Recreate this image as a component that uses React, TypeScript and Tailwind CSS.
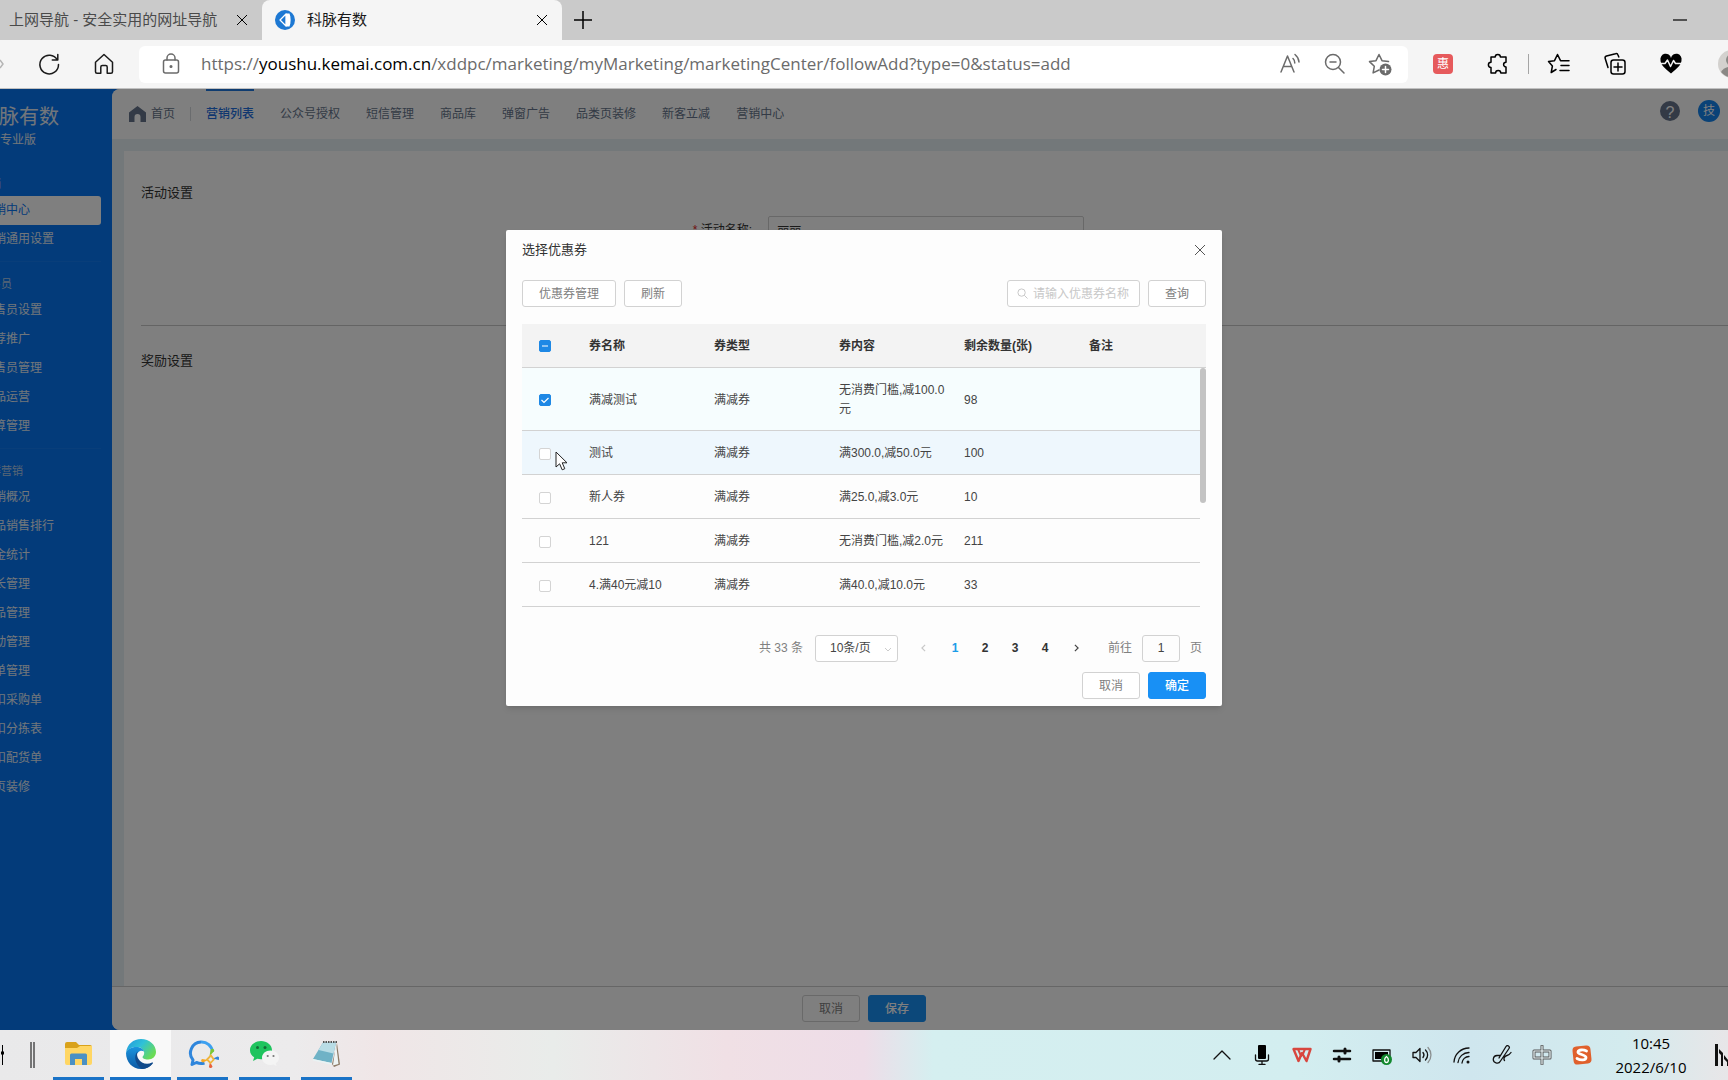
import { useEffect, useRef, useState } from "react";
import type { ReactNode } from "react";
import clsx from "clsx";

type Coupon = {
  id: number;
  name: string;
  type: string;
  content: string;
  left: number;
};

const coupons: Coupon[] = [
  { id: 1, name: "满减测试", type: "满减券", content: "无消费门槛,减100.0元", left: 98 },
  { id: 2, name: "测试", type: "满减券", content: "满300.0,减50.0元", left: 100 },
  { id: 3, name: "新人券", type: "满减券", content: "满25.0,减3.0元", left: 10 },
  { id: 4, name: "121", type: "满减券", content: "无消费门槛,减2.0元", left: 211 },
  { id: 5, name: "4.满40元减10", type: "满减券", content: "满40.0,减10.0元", left: 33 },
];

const topNav = [
  "营销列表",
  "公众号授权",
  "短信管理",
  "商品库",
  "弹窗广告",
  "品类页装修",
  "新客立减",
  "营销中心",
];

const sideGroups = [
  { title: "营销", items: ["营销中心", "营销通用设置"] },
  { title: "销售员", items: ["销售员设置", "推荐推广", "销售员管理", "商品运营", "结算管理"] },
  {
    title: "社群营销",
    items: [
      "营销概况",
      "商品销售排行",
      "佣金统计",
      "团长管理",
      "商品管理",
      "活动管理",
      "订单管理",
      "代扣采购单",
      "代扣分拣表",
      "代扣配货单",
      "首页装修",
    ],
  },
];

function CloseIcon({ className }: { className?: string }) {
  return (
    <svg className={className} viewBox="0 0 12 12" fill="none" stroke="currentColor" aria-hidden>
      <path d="M1 1l10 10M11 1L1 11" />
    </svg>
  );
}

function ToolIcon({ children, className }: { children: ReactNode; className?: string }) {
  return (
    <svg
      viewBox="0 0 24 24"
      fill="none"
      stroke="currentColor"
      strokeWidth="1.5"
      strokeLinecap="round"
      strokeLinejoin="round"
      className={clsx("size-6 shrink-0", className)}
      aria-hidden
    >
      {children}
    </svg>
  );
}

function TabBar() {
  return (
    <div className="flex h-10 items-stretch bg-[#cacaca] text-[15px]">
      <div className="flex w-[262px] items-center justify-between pr-3.5 pl-[9px] text-[#4a4a4a]">
        <span className="whitespace-nowrap">上网导航 - 安全实用的网址导航</span>
        <button type="button" aria-label="关闭标签页" className="text-black">
          <CloseIcon className="size-3" />
        </button>
      </div>
      <div className="flex w-[300px] items-center rounded-t-lg bg-[#f5f5f5] pr-3.5 pl-[13px] text-[#1a1a1a]">
        <svg viewBox="0 0 20 20" className="size-5" aria-hidden>
          <circle cx="10" cy="10" r="10" fill="#1d78d3" />
          <path d="M11 4v12L5 10z" fill="none" stroke="#fff" strokeWidth="1.300" strokeLinejoin="round" />
          <path d="M11 3.500h3.500c1.500 3.500 1.500 9.500 0 13H11z" fill="#fff" />
        </svg>
        <span className="ml-3 flex-1">科脉有数</span>
        <button type="button" aria-label="关闭标签页" className="text-black">
          <CloseIcon className="size-3" />
        </button>
      </div>
      <button type="button" aria-label="新建标签页" className="ml-3">
        <svg viewBox="0 0 18 18" className="size-[18px]" stroke="#000" strokeWidth="1.500" aria-hidden>
          <path d="M9 0v18M0 9h18" />
        </svg>
      </button>
      <button type="button" aria-label="最小化" className="mr-[41px] ml-auto">
        <svg viewBox="0 0 14 2" className="h-0.5 w-3.5" aria-hidden>
          <path d="M0 1h14" stroke="#000" strokeWidth="1.200" />
        </svg>
      </button>
    </div>
  );
}

function AddressBar() {
  return (
    <div className="flex h-12 items-center bg-[#f5f5f5] text-[#1a1a1a]">
      <svg viewBox="0 0 4 10" className="h-2.5 w-1" fill="none" stroke="#b5b5b5" strokeWidth="1.500" aria-hidden>
        <path d="M0 1l3 4-3 4" />
      </svg>
      <button type="button" aria-label="刷新" className="ml-[33px]">
        <ToolIcon>
          <path d="M20.300 8A9.300 9.300 0 1 0 21.500 12.500M20.800 2.500V8h-5.500" />
        </ToolIcon>
      </button>
      <button type="button" aria-label="主页" className="ml-[31px]">
        <ToolIcon>
          <path d="M3.500 10.200L12 2.500l8.500 7.700v9.600a1.500 1.500 0 0 1-1.500 1.500h-3.800v-6.300a1.500 1.500 0 0 0-1.500-1.500h-3.400a1.500 1.500 0 0 0-1.500 1.500v6.300H5a1.500 1.500 0 0 1-1.500-1.500z" />
        </ToolIcon>
      </button>
      <div className="ml-[23px] flex h-[37px] flex-1 items-center rounded-md bg-white pr-4 pl-5 text-[#6b6b6b]">
        <ToolIcon>
          <rect x="4.500" y="8" width="15" height="13" rx="2" />
          <path d="M8 8V6a4 4 0 0 1 8 0v2" />
          <circle cx="12" cy="14.500" r=".8" fill="currentColor" />
        </ToolIcon>
        <div
          role="textbox"
          tabIndex={0}
          aria-label="地址栏"
          className="ml-[18px] flex-1 font-['Open_Sans','Noto_Sans_CJK_SC',sans-serif] text-[17px] whitespace-nowrap"
        >
          https://<span className="text-black">youshu.kemai.com.cn</span>
          /xddpc/marketing/myMarketing/marketingCenter/followAdd?type=0&status=add
        </div>
        <div className="flex items-center gap-[21px]">
          <ToolIcon>
            <path d="M3 20L9.500 4 16 20M5.200 14.500h8.600M15 6.500a6 6 0 0 1 1.800 4.500M17 2.500a11 11 0 0 1 4 7.500" />
          </ToolIcon>
          <ToolIcon>
            <circle cx="10" cy="10" r="7.500" />
            <path d="M15.500 15.500L21 21M7 10h6" />
          </ToolIcon>
          <ToolIcon>
            <path d="M11 18l-5.900 2.900 1.200-6.600L1.500 9.600l6.500-.9L11 2.500l3 6.200 6.500.9" />
            <circle cx="17.500" cy="17.500" r="6" fill="#6b6b6b" stroke="none" />
            <path d="M17.500 14.500v6M14.500 17.500h6" stroke="#fff" />
          </ToolIcon>
        </div>
      </div>
      <div className="ml-[25px] flex items-center text-black">
        <span className="grid size-5 place-items-center rounded bg-[#e65a5c] text-xs text-white">惠</span>
        <ToolIcon className="ml-[33px]">
          <path d="M5 5h4.200a2.600 2.600 0 0 1 5.200 0H20v5.200a2.400 2.400 0 0 0 0 4.800v6h-5.200a2.600 2.600 0 0 0-5.200 0H5v-5.600a2.600 2.600 0 0 1 0-5.200z" />
        </ToolIcon>
        <span className="ml-[18px] h-5 w-px bg-[#a5a5a5]" />
        <ToolIcon className="ml-[18px]">
          <path d="M9 17.500l-4.800 3 1.200-6.500L1.500 9.600l6-.9 3-6.200 3 6.200h8.500M14 13.500h8M13 18.500h9" />
        </ToolIcon>
        <ToolIcon className="ml-8">
          <path d="M5 15.500l-2.800-9A2 2 0 0 1 3.500 4l9-2.300A2 2 0 0 1 15 3l.8 2" />
          <rect x="8" y="8" width="14" height="14" rx="2.500" />
          <path d="M15 11v8M11 15h8" />
        </ToolIcon>
        <ToolIcon className="ml-8">
          <path
            d="M12 21.500C5.500 16 1.500 12.500 1.500 8.200A5.200 5.200 0 0 1 12 6a5.200 5.200 0 0 1 10.500 2.200c0 4.300-4 7.800-10.500 13.300z"
            fill="currentColor"
            stroke="none"
          />
          <path d="M1.500 11.500H6l2.500-3.500 3 6.500 3-6 2 3h6" stroke="#f5f5f5" />
        </ToolIcon>
        <div className="ml-[35px] h-7 w-2.5 overflow-hidden">
          <svg viewBox="0 0 28 28" className="size-7 max-w-none" aria-hidden>
            <circle cx="14" cy="14" r="14" fill="#d3d1ce" />
            <circle cx="14" cy="10" r="6" fill="#8a8885" />
            <path d="M3 22a12 9 0 0 1 22 0 14 14 0 0 1-22 0z" fill="#8a8885" />
          </svg>
        </div>
      </div>
    </div>
  );
}

function Sidebar() {
  return (
    <aside className="w-28 shrink-0 overflow-hidden text-xs text-[#e4edf6]">
      {/* the window is scrolled sideways, so the left edge of the menu is cut off */}
      <div className="-ml-[21px] whitespace-nowrap">
        <div className="pt-3.5">
          <p className="text-xl leading-7">科脉有数</p>
          <p className="pl-[21px] leading-[18px]">专业版</p>
        </div>
        <nav className="mt-[13px] mr-[11px]">
          {sideGroups.map((group, index) => (
            <div
              key={group.title}
              className={clsx("pt-2.5", index > 0 && "mt-[7px] border-t border-white/5")}
            >
              <p className="h-6 text-[11px] leading-6 text-[#b4cdea]">{group.title}</p>
              <ul>
                {group.items.map((item) => (
                  <li key={item}>
                    <a
                      href="#"
                      className={clsx(
                        "block h-[29px] rounded-[3px] pl-[3px] leading-[29px]",
                        item === "营销中心" && "bg-white text-[#0676f4]",
                      )}
                    >
                      {item}
                    </a>
                  </li>
                ))}
              </ul>
            </div>
          ))}
        </nav>
      </div>
    </aside>
  );
}

function TopNav() {
  return (
    <header className="flex h-[50px] items-center bg-white pl-[17px] text-xs text-[#66758c]">
      <a href="#" className="flex items-center gap-[5px]">
        <svg viewBox="0 0 17 16" className="h-4 w-[17px]" aria-hidden>
          <path d="M8.500 0L17 6.500V16h-5.500v-5a3 3 0 0 0-6 0v5H0V6.500z" fill="#66758c" />
        </svg>
        首页
      </a>
      <span className="mx-[15px] h-3.5 w-px bg-[#d5d8dd]" />
      <nav className="flex h-full gap-[26px]">
        {topNav.map((label, index) => (
          <a
            key={label}
            href="#"
            className={clsx(
              "border-t-2 pt-3.5 leading-[18px]",
              index === 0 ? "border-[#1f78e0] font-medium text-[#1f6fe0]" : "border-transparent",
            )}
          >
            {label}
          </a>
        ))}
      </nav>
      <div className="mb-[7px] ml-auto flex items-center pr-2">
        <span className="grid size-5 place-items-center rounded-full bg-[#66758c] text-base text-white">?</span>
        <span className="ml-[18px] grid size-[22px] place-items-center rounded-full bg-[#1484ee] text-xs text-white">
          技
        </span>
      </div>
    </header>
  );
}

function ActivityForm() {
  return (
    <main className="ml-3 flex-1 bg-white pl-[17px] text-[13px] text-[#333]">
      <section className="h-[175px] border-b border-[#c8c8c8] pt-8">
        <h2 className="leading-5">活动设置</h2>
        <div className="flex items-center justify-center pt-[13px] text-xs">
          <label htmlFor="activity-name" className="mr-4">
            <span className="text-[#e02020]">*</span> 活动名称:
          </label>
          <input
            id="activity-name"
            defaultValue="丽丽"
            className="mr-[92px] h-7 w-[316px] rounded-xs border border-[#d0d0d0] px-2"
          />
        </div>
      </section>
      <section className="pt-[25px]">
        <h2 className="leading-5">奖励设置</h2>
      </section>
    </main>
  );
}

function Btn({ children, primary, className }: { children: ReactNode; primary?: boolean; className?: string }) {
  return (
    <button
      type="button"
      className={clsx(
        "h-[27px] rounded-[3px] border px-4 text-xs",
        primary ? "border-[#1890f5] bg-[#1890f5] font-medium text-white" : "border-[#d2d2d2] bg-white text-[#808080]",
        className,
      )}
    >
      {children}
    </button>
  );
}

type CheckProps = {
  label: string;
  checked: boolean;
  partial?: boolean;
  onChange: () => void;
};

function Check({ label, checked, partial = false, onChange }: CheckProps) {
  const ref = useRef<HTMLInputElement>(null);

  useEffect(() => {
    if (ref.current) ref.current.indeterminate = partial;
  }, [partial]);

  return (
    <span className="relative mx-auto block size-3">
      <input
        ref={ref}
        type="checkbox"
        aria-label={label}
        checked={checked}
        onChange={onChange}
        className="block size-3 appearance-none rounded-xs border border-[#d4d4d4] bg-white checked:border-[#1e88e5] checked:bg-[#1e88e5] indeterminate:border-[#1e88e5] indeterminate:bg-[#1e88e5]"
      />
      {(checked || partial) && (
        <svg
          viewBox="0 0 12 12"
          className="pointer-events-none absolute inset-0 size-3"
          fill="none"
          stroke="#fff"
          aria-hidden
        >
          {partial ? <path d="M3 6h6" /> : <path d="M2.500 6l2.500 2.500 4.500-4.500" strokeWidth="1.200" />}
        </svg>
      )}
    </span>
  );
}

function CouponTable() {
  const [selected, setSelected] = useState<number[]>([1]);
  const all = selected.length === coupons.length;

  const toggle = (id: number) =>
    setSelected((prev) => (prev.includes(id) ? prev.filter((x) => x !== id) : [...prev, id]));

  return (
    <div className="relative mt-[17px]">
      <table className="w-full table-fixed border-separate border-spacing-0 text-left text-xs text-[#444]">
        <colgroup>
          <col className="w-[57px]" />
          <col className="w-[125px]" />
          <col className="w-[125px]" />
          <col className="w-[125px]" />
          <col className="w-[125px]" />
          <col />
          <col className="w-1.5" />
        </colgroup>
        <thead>
          <tr className="h-11 bg-[#f3f3f3] text-[#333] *:border-b *:border-[#d2d2d2]">
            <th className="pr-3">
              <Check
                label="全选"
                checked={all}
                partial={selected.length > 0 && !all}
                onChange={() => setSelected(all ? [] : coupons.map((c) => c.id))}
              />
            </th>
            <th className="px-2.5 font-bold">券名称</th>
            <th className="px-2.5 font-bold">券类型</th>
            <th className="px-2.5 font-bold">券内容</th>
            <th className="px-2.5 font-bold">剩余数量(张)</th>
            <th className="px-2.5 font-bold">备注</th>
            <th />
          </tr>
        </thead>
        <tbody>
          {coupons.map((coupon) => (
            <tr key={coupon.id} className="leading-[19px]">
              {[
                <Check
                  key="check"
                  label={`选择${coupon.name}`}
                  checked={selected.includes(coupon.id)}
                  onChange={() => toggle(coupon.id)}
                />,
                coupon.name,
                coupon.type,
                coupon.content,
                coupon.left,
                "",
              ].map((cell, index) => (
                <td
                  key={index}
                  className={clsx(
                    "border-b border-[#d2d2d2] pt-[13px] pb-[11px]",
                    index === 0 ? "pr-3" : "pr-1 pl-2.5",
                    coupon.id === 1 && "bg-[#f6fdfe]",
                    coupon.id === 2 && "bg-[#eef7fd]",
                  )}
                >
                  {cell}
                </td>
              ))}
              <td />
            </tr>
          ))}
        </tbody>
      </table>
      <span className="absolute top-11 right-0 h-[135px] w-1.5 rounded-full bg-[#c3c3c3]" />
      <svg viewBox="0 0 13 20" className="absolute top-[127px] left-[33px] h-5 w-[13px]" aria-hidden>
        <path
          d="M1 1v15l3.600-3.200 2.600 6 2.600-1.100-2.600-5.900H12z"
          fill="#fff"
          stroke="#222"
          strokeLinejoin="round"
        />
      </svg>
    </div>
  );
}

function Chevron({ className }: { className?: string }) {
  return (
    <svg
      viewBox="0 0 6 10"
      className={clsx("mx-auto h-2 w-[5px]", className)}
      fill="none"
      stroke="currentColor"
      strokeWidth="1.500"
      aria-hidden
    >
      <path d="M1 1l4 4-4 4" />
    </svg>
  );
}

function Pager() {
  return (
    <div className="flex items-center justify-end pr-1 text-xs text-[#808080]">
      <span>共 33 条</span>
      <div className="relative ml-3">
        <select
          aria-label="每页条数"
          className="h-[27px] w-[83px] appearance-none rounded-[3px] border border-[#d2d2d2] bg-white pl-3.5 text-[#444]"
        >
          <option>10条/页</option>
        </select>
        <svg
          viewBox="0 0 8 5"
          className="pointer-events-none absolute top-3 right-1.5 h-[5px] w-2"
          fill="none"
          stroke="#ccc"
          aria-hidden
        >
          <path d="M1 1l3 3 3-3" />
        </svg>
      </div>
      <button type="button" aria-label="上一页" className="ml-2.5 w-8 text-[#c8c8c8]">
        <Chevron className="rotate-180" />
      </button>
      <div className="mr-0.5 flex font-bold text-[#333]">
        {[1, 2, 3, 4].map((page) => (
          <button
            key={page}
            type="button"
            className={clsx("h-7 w-[30px] text-center", page === 1 && "text-[#1c9ce8]")}
          >
            {page}
          </button>
        ))}
      </div>
      <button type="button" aria-label="下一页" className="w-[30px] text-[#444]">
        <Chevron />
      </button>
      <label htmlFor="goto" className="ml-4">
        前往
      </label>
      <input
        id="goto"
        defaultValue="1"
        className="mr-2.5 ml-2.5 h-[27px] w-[38px] rounded-[3px] border border-[#d2d2d2] text-center text-[#444]"
      />
      页
    </div>
  );
}

function CouponDialog() {
  return (
    <div className="absolute inset-0 flex items-start justify-center bg-black/50 pt-[141px]">
      <div
        role="dialog"
        aria-modal="true"
        aria-labelledby="coupon-title"
        className="w-[716px] rounded-xs bg-[#fdfdfd] px-4 pt-[9px] pb-[7px] shadow-md"
      >
        <div className="flex items-center justify-between">
          <h1 id="coupon-title" className="text-[13px] leading-[22px] text-[#333]">
            选择优惠券
          </h1>
          <button type="button" aria-label="关闭" className="text-[#555]">
            <CloseIcon className="size-3" />
          </button>
        </div>
        <div className="mt-[19px] flex gap-2">
          <Btn>优惠券管理</Btn>
          <Btn>刷新</Btn>
          <div className="relative ml-auto">
            <svg
              viewBox="0 0 12 12"
              className="absolute top-2 left-2.5 size-[11px]"
              fill="none"
              stroke="#c4c4c4"
              aria-hidden
            >
              <circle cx="5" cy="5" r="4" />
              <path d="M8 8l3.500 3.500" />
            </svg>
            <input
              aria-label="优惠券名称"
              placeholder="请输入优惠券名称"
              className="h-[27px] w-[133px] rounded-[3px] border border-[#d2d2d2] bg-white pl-[25px] text-xs placeholder:text-[#c8c8c8]"
            />
          </div>
          <Btn>查询</Btn>
        </div>
        <CouponTable />
        <div className="mt-[27px]">
          <Pager />
        </div>
        <div className="mt-2.5 flex justify-end gap-2">
          <Btn>取消</Btn>
          <Btn primary>确定</Btn>
        </div>
      </div>
    </div>
  );
}

function TaskApp({ children, active, className }: { children: ReactNode; active?: boolean; className?: string }) {
  return (
    <button
      type="button"
      className={clsx(
        "flex h-full items-center justify-center border-b-[3px] border-[#1a73c7]",
        active ? "w-[61px] bg-white/70" : "w-[51px]",
        className,
      )}
    >
      <svg viewBox="0 0 32 32" className="size-8" aria-hidden>
        {children}
      </svg>
    </button>
  );
}

function TrayIcon({ children }: { children: ReactNode }) {
  return (
    <svg
      viewBox="0 0 20 20"
      className="size-5"
      fill="none"
      stroke="#111"
      strokeWidth="1.300"
      strokeLinecap="round"
      strokeLinejoin="round"
      aria-hidden
    >
      {children}
    </svg>
  );
}

function Taskbar() {
  return (
    <footer className="flex h-[50px] items-center bg-[linear-gradient(90deg,#e9e9ea_0%,#ecebec_17%,#f0e6e7_22%,#e9ecea_32%,#f0e0e5_42%,#eedde8_50%,#d5eff0_54%,#d3eef0_75%,#cfe6ee_85%,#d3ebee_94%,#e8e6e8_100%)]">
      <div className="flex h-full flex-1 items-center">
        <svg viewBox="0 0 36 28" className="h-7 w-9" stroke="#000" aria-hidden>
          <path d="M2.500 4v20M31 1v26M34 1v26" />
          <path d="M1 12h3" strokeWidth="3" />
        </svg>
        <TaskApp className="ml-[17px]">
          <path d="M2 6a2 2 0 0 1 2-2h9l3 3h11a2 2 0 0 1 2 2v5H2z" fill="#d9a21b" />
          <path d="M2 10h12l3-2h12v17a2 2 0 0 1-2 2H4a2 2 0 0 1-2-2z" fill="#ffd663" />
          <path d="M7 27V17a1.500 1.500 0 0 1 1.500-1.500h14A1.500 1.500 0 0 1 24 17v10h-5v-6h-7v6z" fill="#4a90c4" />
        </TaskApp>
        <TaskApp active className="ml-1.5">
          <defs>
            <linearGradient id="edge-top" x1="0" y1="0" x2="1" y2="0.600">
              <stop offset="0" stopColor="#2394de" />
              <stop offset="0.500" stopColor="#2fc1d8" />
              <stop offset="1" stopColor="#6bdc55" />
            </linearGradient>
            <linearGradient id="edge-left" x1="0" y1="0" x2="0" y2="1">
              <stop offset="0" stopColor="#1b94de" />
              <stop offset="1" stopColor="#0c59a4" />
            </linearGradient>
          </defs>
          <path
            d="M1 15C2 6 8.500 1 16 1c8.500 0 15 6 15 13 0 4.500-3.500 7.500-7.800 7.500-4 0-5.700-1.500-5.700-2.500 0-.7 1.700-1.500 1.700-4 0-3-3-6-7.500-6C6 9 2 12 1 15z"
            fill="url(#edge-top)"
          />
          <path
            d="M1 15c1-3.500 5-6 10.500-6 4.500 0 7 2.500 7.500 4.500-1-.8-2.500-1-4-.5-3.500 1.500-4.500 6-2.500 9.500 2.500 4.500 8.500 7.500 15 2.500C25 29 20.500 31 16 31 7.500 31 1 24 1 15z"
            fill="url(#edge-left)"
          />
          <path
            d="M12.500 13.500c-4 4-3 12.500 4.500 17.400 4.500-.1 8-2 10.800-5.400.6-.8 0-1.300-.8-.9-5.500 2.900-11 .4-13.500-3.600-1.500-2.500-1.800-5-1-7.500z"
            fill="#114a8b"
          />
        </TaskApp>
        <TaskApp className="ml-1.5">
          <path
            d="M14 4a11 11 0 0 0-8 18l-1 4.500 4.500-2a12 12 0 0 0 8 .5"
            fill="none"
            stroke="#2f86dc"
            strokeWidth="3"
            strokeLinejoin="round"
          />
          <path d="M14 4a11 11 0 0 1 11.500 10" fill="none" stroke="#3da0f0" strokeWidth="3" />
          <path d="M22.500 18l1-5.500a1.900 1.900 0 0 1 3.800.4z" fill="#7bc832" />
          <path d="M26 20.500l4.500-2a1.900 1.900 0 0 1 1 3.500z" fill="#2f86dc" />
          <path d="M23 24l2.500 4.500a1.900 1.900 0 0 1-3.600.5z" fill="#e8603c" />
          <path d="M21 22l-5 2.500a1.900 1.900 0 0 1-.8-3.600z" fill="#f7a823" />
          <path d="M24 17.500l2.800 4-3.300 3.500-3.500-3.500z" fill="none" stroke="#f0b43c" strokeWidth="1.800" />
        </TaskApp>
        <TaskApp className="ml-[11px]">
          <path d="M12 3C6 3 1 7 1 12.200c0 3 1.600 5.400 4.200 7.100L4 23l4.300-2.200c1.200.3 2.400.5 3.700.5 6 0 11-4 11-9.100S18 3 12 3z" fill="#1fc45e" />
          <circle cx="8.500" cy="9.500" r="1.500" fill="#146b36" />
          <circle cx="16" cy="9.500" r="1.500" fill="#146b36" />
          <path d="M21.500 12.500c-4.800 0-8.500 3.200-8.500 7.200s3.700 7.200 8.500 7.200c1 0 2-.2 3-.5l3 1.600-.8-2.700c2-1.300 3.300-3.300 3.300-5.600 0-4-3.700-7.200-8.500-7.200z" fill="#f4f4f4" />
          <circle cx="18.700" cy="18" r="1.100" fill="#777" />
          <circle cx="24.500" cy="18" r="1.100" fill="#777" />
        </TaskApp>
        <TaskApp className="ml-[11px]">
          <path d="M26 5l3 21.500-6 2.500-2-3z" fill="#8c7a66" />
          <path d="M25 5l2.500 21-5.500 1.500z" fill="#eef4f4" />
          <path d="M12 4.500h13l-4.500 20.500L2 21z" fill="#6fb2c6" />
          <path d="M12 4.500h13l-2.500 11L7.500 12z" fill="#b9dde6" />
          <path d="M2 21l18.500 4-.3 1.800L2 22.500z" fill="#e9f3f4" />
          <path d="M12 4h14" stroke="#555" strokeWidth="2" strokeDasharray="1.500 1" />
        </TaskApp>
      </div>
      <div className="flex items-center gap-5">
        <TrayIcon>
          <path d="M2 14l8-8 8 8" />
        </TrayIcon>
        <TrayIcon>
          <rect x="6" y="0" width="8" height="14" rx="1" fill="#000" stroke="none" />
          <path d="M3.500 10v4a2 2 0 0 0 2 2h9a2 2 0 0 0 2-2v-4M10 16v3.500M7 19.500h6" />
        </TrayIcon>
        <TrayIcon>
          <path d="M1.500 4h17l-4 12-4.500-8-3.500 8z" stroke="#d8463e" strokeWidth="2.400" />
          <path d="M6 4l3 7M13 4l-2.500 6" stroke="#d8463e" strokeWidth="2" />
        </TrayIcon>
        <TrayIcon>
          <path d="M2 6h16M2 14h16" strokeWidth="2.500" />
          <path d="M13 4v4M7 12v4" strokeWidth="3" />
        </TrayIcon>
        <TrayIcon>
          <rect x="1" y="5" width="17" height="11" />
          <rect x="3" y="7" width="13" height="7" fill="#000" stroke="none" />
          <circle cx="14.500" cy="14.500" r="5.500" fill="#12882e" stroke="none" />
          <path d="M14.500 11.500c3 2 2 6 0 6s-3-4 0-6z" stroke="#fff" />
        </TrayIcon>
        <TrayIcon>
          <path d="M1 7.500h3l4-4v13l-4-4H1zM11 7.500a4 4 0 0 1 0 5M13.500 5a7 7 0 0 1 0 10" />
          <path d="M16 2.500a11 11 0 0 1 0 15" stroke="#8a8f90" />
        </TrayIcon>
        <TrayIcon>
          <path d="M2 17A15 15 0 0 1 17 3M6 17.500A11 11 0 0 1 17 7.500M10 18a7 7 0 0 1 7-6.500" />
          <circle cx="16" cy="17" r="1.500" fill="#111" stroke="none" />
        </TrayIcon>
        <TrayIcon>
          <path d="M8.500 10.500H5a3.800 3.800 0 1 0 3.500 5.500L17 3.500A1.800 1.800 0 0 0 14 1.500L7 13M12.500 15.500c-1.500-2 .5-4.500 2.500-5s3-1.500 4-3" />
        </TrayIcon>
        <TrayIcon>
          <path d="M10 1v18M2 6h16v7H2z" strokeWidth="3" stroke="#555" />
          <path d="M10 1v18M2 6h16v7H2z" strokeWidth="1.200" stroke="#e8f4f5" />
        </TrayIcon>
        <TrayIcon>
          <rect x="1" y="1" width="18" height="18" rx="4" fill="#e0602c" stroke="none" transform="rotate(-6 10 10)" />
          <path d="M14.500 6c-3-1.500-8-1.500-8.500 1s8 2.500 8 5.500-5.500 3-9 1" stroke="#fff" strokeWidth="2.800" />
        </TrayIcon>
      </div>
      <div className="ml-[21px] flex w-[76px] flex-col text-center font-['Open_Sans',sans-serif] text-[15px] leading-6 text-black">
        <time>10:45</time>
        <time>2022/6/10</time>
      </div>
      <svg viewBox="0 0 14 24" className="ml-[25px] h-6 w-3.5" aria-hidden>
        <path d="M1 1h3v22H1zM5 6l4 4v13H7V12l-2-2zM10 12l4 5v6h-1v-4l-3-3z" fill="#111" />
      </svg>
    </footer>
  );
}

export default function App() {
  return (
    <div className="flex min-h-screen flex-col overflow-hidden font-['Liberation_Sans','Noto_Sans_CJK_SC',sans-serif]">
      <TabBar />
      <AddressBar />
      <div className="relative flex flex-1 border-t border-[#c0c0c0] bg-[#0676f4]">
        <Sidebar />
        <div className="flex min-w-0 flex-1 flex-col overflow-hidden rounded-l-lg bg-[#e6f1f4]">
          <TopNav />
          <div className="mt-3 flex flex-1 flex-col">
            <ActivityForm />
          </div>
          <div className="flex h-11 items-center justify-center gap-2 border-t border-[#ccc] bg-white pr-28">
            <Btn>取消</Btn>
            <Btn primary>保存</Btn>
          </div>
        </div>
        <CouponDialog />
      </div>
      <Taskbar />
    </div>
  );
}
